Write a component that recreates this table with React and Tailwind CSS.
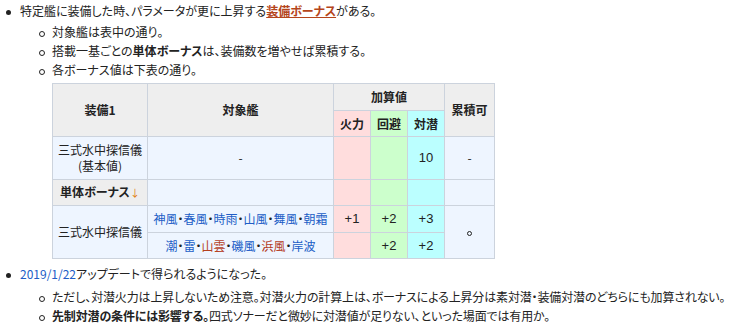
import React from "react";

const blue = "text-[#215dc6]";
const red = "text-[#b5401f]";

function Disc() {
  return <span className="inline-block w-[5px] h-[5px] rounded-full bg-[#222] mr-[9px] ml-[6px] align-middle" />;
}

function Circle() {
  return <span className="inline-block w-[6px] h-[6px] rounded-full border border-[#222] mr-[7px] ml-[39px] align-middle" />;
}

function Ships({ items }) {
  return (
    <>
      {items.map((s, i) => (
        <React.Fragment key={s.n}>
          {i > 0 && <span className="text-[#222]">・</span>}
          <span className={s.r ? red : blue}>{s.n}</span>
        </React.Fragment>
      ))}
    </>
  );
}

const row1 = [
  { n: "神風" }, { n: "春風" }, { n: "時雨" }, { n: "山風" }, { n: "舞風" }, { n: "朝霜" },
];
const row2 = [
  { n: "潮" }, { n: "雷" }, { n: "山雲", r: true }, { n: "磯風" }, { n: "浜風", r: true }, { n: "岸波" },
];

export default function App() {
  const th = "border border-[#ccd3dd] bg-[#eeeeee] font-bold text-center p-0";
  const td = "border border-[#ccd3dd] bg-[#eef5ff] text-center p-0";
  const num = "font-['Liberation_Sans',sans-serif] text-[13px]";
  const fire = "border border-[#ccd3dd] bg-[#ffdddd] text-center p-0";
  const eva = "border border-[#ccd3dd] bg-[#ccffcc] text-center p-0";
  const asw = "border border-[#ccd3dd] bg-[#bbffff] text-center p-0";

  return (
    <div className="w-[735px] h-[328px] bg-white text-[#222] text-[12px] leading-[19px] font-['Noto_Sans_CJK_JP',sans-serif] [font-feature-settings:'palt']">
      <div className="pt-[1px]">
        <div>
          <Disc />
          特定艦に装備した時、パラメータが更に上昇する
          <span className="font-bold underline text-[#b5451b]">装備ボーナス</span>
          がある。
        </div>
        <div className="mt-[2px]">
          <div><Circle />対象艦は表中の通り。</div>
          <div><Circle />搭載一基ごとの<span className="font-bold">単体ボーナス</span>は、装備数を増やせば累積する。</div>
          <div><Circle />各ボーナス値は下表の通り。</div>
        </div>

        <table className="ml-[52px] mt-[4px] border-collapse table-fixed w-[442px] leading-[16px]">
          <colgroup>
            <col className="w-[95px]" />
            <col className="w-[186px]" />
            <col className="w-[37px]" />
            <col className="w-[37px]" />
            <col className="w-[37px]" />
            <col className="w-[50px]" />
          </colgroup>
          <tbody>
            <tr className="h-[27px]">
              <th rowSpan={2} className={th}>装備1</th>
              <th rowSpan={2} className={th}>対象艦</th>
              <th colSpan={3} className={th}>加算値</th>
              <th rowSpan={2} className={th}>累積可</th>
            </tr>
            <tr className="h-[26px]">
              <th className="border border-[#ccd3dd] bg-[#ffdddd] font-bold text-center p-0">火力</th>
              <th className="border border-[#ccd3dd] bg-[#ccffcc] font-bold text-center p-0">回避</th>
              <th className="border border-[#ccd3dd] bg-[#bbffff] font-bold text-center p-0">対潜</th>
            </tr>
            <tr className="h-[43px]">
              <td className={td}>三式水中探信儀<br />(基本値)</td>
              <td className={td}>-</td>
              <td className={fire}></td>
              <td className={eva}></td>
              <td className={`${asw} ${num}`}>10</td>
              <td className={td}>-</td>
            </tr>
            <tr className="h-[26px]">
              <th className={th}>
                単体ボーナス<span className="text-[#e07a10] text-[10px] font-normal">↓</span>
              </th>
              <td className={td}></td>
              <td className={fire}></td>
              <td className={eva}></td>
              <td className={asw}></td>
              <td className={td}></td>
            </tr>
            <tr className="h-[27px]">
              <td rowSpan={2} className={td}>三式水中探信儀</td>
              <td className={td}><Ships items={row1} /></td>
              <td className={`${fire} ${num}`}>+1</td>
              <td className={`${eva} ${num}`}>+2</td>
              <td className={`${asw} ${num}`}>+3</td>
              <td rowSpan={2} className={td}>
                <span className="inline-block w-[5px] h-[5px] rounded-full border border-[#222] align-middle" />
              </td>
            </tr>
            <tr className="h-[26px]">
              <td className={td}><Ships items={row2} /></td>
              <td className={fire}></td>
              <td className={`${eva} ${num}`}>+2</td>
              <td className={`${asw} ${num}`}>+2</td>
            </tr>
          </tbody>
        </table>

        <div className="mt-[5px]">
          <Disc />
          <span className={blue}>2019/1/22</span>アップデートで得られるようになった。
        </div>
        <div className="mt-[4px] tracking-[-0.15px]">
          <div><Circle />ただし、対潜火力は上昇しないため注意。対潜火力の計算上は、ボーナスによる上昇分は素対潜・装備対潜のどちらにも加算されない。</div>
          <div><Circle /><span className="font-bold">先制対潜の条件には影響する。</span>四式ソナーだと微妙に対潜値が足りない、といった場面では有用か。</div>
        </div>
      </div>
    </div>
  );
}
